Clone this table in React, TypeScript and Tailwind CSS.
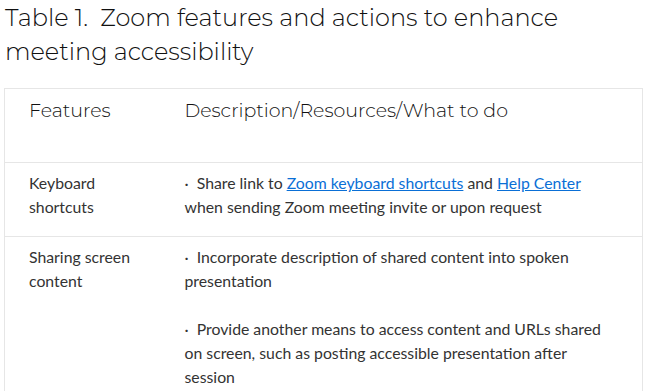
export default function App() {
  const body = "font-['Lato','Liberation_Sans',sans-serif] text-[15.8px] leading-6 text-[#333]"
  const head = "font-['Montserrat','Noto_Sans',sans-serif] font-light text-[19px] leading-[28px] text-[#111]"
  return (
    <div className="w-[649px] h-[391px] overflow-hidden bg-white">
      <h1 className="pl-[5px] pt-[1px] font-['Montserrat','Noto_Sans',sans-serif] text-[24px] leading-[34px] font-light text-[#111]">
        Table 1.&nbsp; Zoom features and actions to enhance meeting accessibility
      </h1>
      <table className="mt-[19px] ml-[4px] w-[639px] table-fixed border-collapse">
        <colgroup>
          <col className="w-[180px]" />
          <col />
        </colgroup>
        <tbody>
          <tr className="border border-[#e6e6e6]">
            <td className={`pl-[24px] pt-[8px] pb-[37px] align-top ${head}`}>Features</td>
            <td className={`pt-[8px] pb-[37px] align-top ${head}`}>Description/Resources/What to do</td>
          </tr>
          <tr className="border border-[#e6e6e6]">
            <td className={`pl-[24px] pt-[8px] pb-[17px] align-top ${body}`}>
              Keyboard
              <br />
              shortcuts
            </td>
            <td className={`pt-[8px] pb-[17px] pr-[30px] align-top ${body}`}>
              ·&nbsp; Share link to{" "}
              <a href="#" className="text-[#0a6fd6] underline">
                Zoom keyboard shortcuts
              </a>{" "}
              and{" "}
              <a href="#" className="text-[#0a6fd6] underline">
                Help Center
              </a>{" "}
              when sending Zoom meeting invite or upon request
            </td>
          </tr>
          <tr className="border border-[#e6e6e6]">
            <td className={`pl-[24px] pt-[8px] pb-[13px] align-top ${body}`}>
              Sharing screen
              <br />
              content
            </td>
            <td className={`pt-[8px] pb-[13px] pr-[30px] align-top ${body}`}>
              <p className="mb-6">·&nbsp; Incorporate description of shared content into spoken presentation</p>
              <p>
                ·&nbsp; Provide another means to access content and URLs shared on screen, such as posting accessible
                presentation after session
              </p>
            </td>
          </tr>
        </tbody>
      </table>
    </div>
  )
}
